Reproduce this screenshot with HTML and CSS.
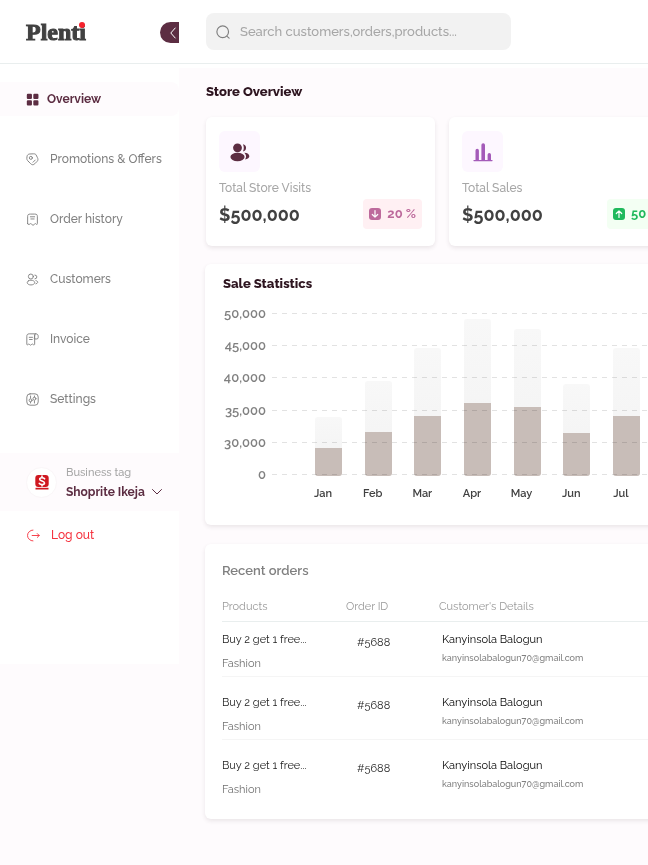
FILE: index.html
```html
<!DOCTYPE html>
<html lang="en">
<head>
<meta charset="utf-8">
<meta name="viewport" content="width=device-width, initial-scale=1">
<title>Plenti – Store Overview</title>
<link rel="stylesheet" href="styles.css">
</head>
<body>
<header class="topbar">
  <div class="brand">
    <a class="logo" href="#">Plent<span class="logo-i">i</span></a>
    <button class="collapse" type="button" aria-label="Collapse sidebar">
      <svg viewBox="0 0 8 12" width="8" height="12"><path d="M6.2 1 1.8 6l4.4 5"/></svg>
    </button>
  </div>
  <label class="search">
    <svg viewBox="0 0 24 24" width="14" height="14"><circle cx="11.5" cy="11.5" r="10"/><path d="m19 19.500 3.500 3"/></svg>
    <input type="search" aria-label="Search" placeholder="Search customers,orders,products...">
  </label>
</header>
<div class="layout">
  <aside class="sidebar">
    <nav class="menu">
      <a class="item active" href="#">
        <svg viewBox="0 0 24 24"><rect x="1.500" y="1.500" width="9.500" height="9.500" rx="2"/><rect x="13.500" y="1.500" width="9.500" height="9.500" rx="2"/><rect x="1.500" y="13.500" width="9.500" height="9.500" rx="2"/><rect x="13.500" y="13.500" width="9.500" height="9.500" rx="2"/></svg>Overview</a>
      <a class="item" href="#">
        <svg viewBox="0 0 24 24"><path d="m4.2 15.3 4.5 4.5c2.5 2.5 5 2.500 7.500 0l4.300-4.300c2-2 2-4.500.4-7.500l-2.200-4.300C17.800 1.900 16.500 1.500 14 1.500L7 1.800C4 2 2 4 1.800 7l-.3 3.200c0 2.100 1.200 3.600 2.700 5.100Z"/><circle cx="9" cy="9" r="2.800"/><path d="m13 17 4-4"/></svg>Promotions &amp; Offers</a>
      <a class="item" href="#">
        <svg viewBox="0 0 24 24"><path d="M3 19.500V7c0-4 1.200-5 5-5h8c3.800 0 5 1 5 5v12.500c0 2-1 2.200-2.200 1l-.4-.4c-.8-.9-2-.8-2.700.2l-1.200 1.500c-1 1.200-2 1.200-3 0l-1.200-1.500c-.7-1-1.900-1.100-2.700-.2l-.4.4C4 21.700 3 21.500 3 19.500ZM8 7h8M9 11h6"/></svg>Order history</a>
      <a class="item" href="#">
        <svg viewBox="0 0 24 24"><circle cx="9" cy="6.500" r="4.600"/><path d="M16.400 3.800a3.500 3.500 0 0 1 .2 7M4.200 14.600c-2.700 1.700-2.700 4.500 0 6.100 2.700 1.800 7.200 1.800 9.900 0 2.700-1.700 2.700-4.500 0-6.100-2.700-1.800-7.200-1.800-9.900 0ZM18.300 20c3.500-.6 4.500-3.700 1.900-5.200-.5-.4-1.200-.6-1.900-.8"/></svg>Customers</a>
      <a class="item" href="#">
        <svg viewBox="0 0 24 24"><path d="M16 3.500c0-1.200 1-2 2-2 3 0 4.500 2 4.500 4.500v2.500c0 1.500-1 2.500-2.500 2.500h-4ZM18 1.500H6c-3.500 0-4.500 2-4.500 4.500v15c0 .8 1 1.300 1.600.8l1.700-1.300c.4-.3 1-.3 1.300.1L7.800 22.300c.4.400 1 .4 1.400 0l1.700-1.700c.3-.4.9-.4 1.300-.1l1.700 1.300c.7.500 2.100 0 2.100-.8V3.500M6 8h6M6.500 12h5"/></svg>Invoice</a>
      <a class="item" href="#">
        <svg viewBox="0 0 24 24"><rect x="1.500" y="1.500" width="21" height="21" rx="6"/><path d="M15.600 18.500v-4M15.600 7.500v-2M8.400 18.500v-2M8.400 9.500v-4"/><circle cx="15.600" cy="10.500" r="2.700"/><circle cx="8.400" cy="13.500" r="2.700"/></svg>Settings</a>
    </nav>
    <div class="business">
      <span class="avatar">
        <svg viewBox="0 0 14 15" width="14" height="15"><rect class="red" x=".3" y="0" width="13.400" height="12" rx="3"/><path class="white" d="M9.600 3.800C8.500 2.300 4.700 2.200 4.700 4.200c0 2.100 4.800 1.400 4.800 3.700 0 2.100-4 2-5.200.5M7 1v1.500M7 9.500V11"/><path class="red" d="M.5 12.800h13v1.700H.5z"/></svg>
      </span>
      <div class="business-text">
        <label for="business">Business tag</label>
        <div class="picker">
          <select id="business"><option>Shoprite Ikeja</option></select>
          <svg viewBox="0 0 12 8" width="12" height="8"><path d="m1.500 1.500 4.500 4.500 4.500-4.500"/></svg>
        </div>
      </div>
    </div>
    <a class="logout" href="#">
      <svg viewBox="0 0 24 24"><path d="M11 22a10 10 0 0 1 0-20M9.500 12h13M19 8.500l3.500 3.500-3.500 3.500"/></svg>Log out</a>
  </aside>
  <main class="content">
    <h1>Store Overview</h1>
    <section class="stats">
      <article class="card stat">
        <span class="badge"><svg class="people" viewBox="0 0 24 24" width="20" height="20"><circle cx="9" cy="7" r="5.300"/><path d="M15.500 2.600a4.400 4.400 0 0 1 0 8.700c1.400-2.600 1.400-6.100 0-8.700Z"/><ellipse cx="9" cy="18" rx="8.500" ry="5"/><path d="M17 13c8 .2 8.200 7.500 1 8 2-2.500 1.500-6-1-8Z"/></svg></span>
        <p class="stat-name">Total Store Visits</p>
        <div class="stat-row"><strong>$500,000</strong>
          <span class="trend down"><svg viewBox="0 0 12 12" width="12" height="12"><rect width="12" height="12" rx="3"/><path d="M6 2.500v6.500M3.300 6.500 6 9.200l2.700-2.700"/></svg>20 %</span></div>
      </article>
      <article class="card stat">
        <span class="badge"><svg class="chart-icon" viewBox="0 0 20 20" width="20" height="20"><path d="M1 18.600h18"/><path class="col" d="M2.500 18V8.500a1.700 1.700 0 0 1 3.400 0V18ZM8.400 18V3a1.800 1.800 0 0 1 3.600 0v15ZM14.600 18v-5.200a1.700 1.700 0 0 1 3.400 0V18Z"/></svg></span>
        <p class="stat-name">Total Sales</p>
        <div class="stat-row"><strong>$500,000</strong>
          <span class="trend up"><svg viewBox="0 0 12 12" width="12" height="12"><rect width="12" height="12" rx="3"/><path d="M6 9.500V3M3.300 5.500 6 2.800l2.700 2.700"/></svg>50</span></div>
      </article>
    </section>
    <section class="card sales">
      <h2>Sale Statistics</h2>
      <div class="chart">
        <ul class="ticks"><li>50,000</li><li>45,000</li><li>40,000</li><li>35,000</li><li>30,000</li><li>0</li></ul>
        <ul class="lines"><li></li><li></li><li></li><li></li><li></li><li></li></ul>
        <div class="bars">
          <div class="bar" style="height:59px"><i style="height:28px"></i></div>
          <div class="bar" style="height:95px"><i style="height:44px"></i></div>
          <div class="bar" style="height:128px"><i style="height:60px"></i></div>
          <div class="bar" style="height:157px"><i style="height:73px"></i></div>
          <div class="bar" style="height:147px"><i style="height:69px"></i></div>
          <div class="bar" style="height:92px"><i style="height:43px"></i></div>
          <div class="bar" style="height:128px"><i style="height:60px"></i></div>
        </div>
        <ul class="months"><li>Jan</li><li>Feb</li><li>Mar</li><li>Apr</li><li>May</li><li>Jun</li><li>Jul</li></ul>
      </div>
    </section>
    <section class="card orders">
      <h2>Recent orders</h2>
      <table>
        <thead><tr><th class="product">Products</th><th class="id">Order ID</th><th>Customer's Details</th></tr></thead>
        <tbody>
          <tr><td><b>Buy 2 get 1 free...</b><span>Fashion</span></td><td class="id">#5688</td><td class="customer"><b>Kanyinsola Balogun</b><small>kanyinsolabalogun70@gmail.com</small></td></tr>
          <tr><td><b>Buy 2 get 1 free...</b><span>Fashion</span></td><td class="id">#5688</td><td class="customer"><b>Kanyinsola Balogun</b><small>kanyinsolabalogun70@gmail.com</small></td></tr>
          <tr><td><b>Buy 2 get 1 free...</b><span>Fashion</span></td><td class="id">#5688</td><td class="customer"><b>Kanyinsola Balogun</b><small>kanyinsolabalogun70@gmail.com</small></td></tr>
        </tbody>
      </table>
    </section>
  </main>
</div>
</body>
</html>
```
FILE: styles.css
```css
* { box-sizing: border-box; }
body {
  margin: 0;
  min-height: 100vh;
  background: #fefbfd;
  color: #414141;
  font: 500 12px/16px Raleway, Lato, "Open Sans", sans-serif;
  overflow-x: hidden;
}
h1, h2, p, ul { margin: 0; padding: 0; }
ul { list-style: none; }
a { color: inherit; text-decoration: none; }
svg { display: block; flex: none; fill: none; stroke: currentColor; stroke-linecap: round; stroke-linejoin: round; }

.topbar {
  display: flex;
  align-items: center;
  height: 64px;
  background: #fff;
  border-bottom: 1px solid #e9eeee;
}
.brand {
  flex: none;
  width: 179px;
  padding-left: 26px;
  display: flex;
  align-items: center;
  justify-content: space-between;
}
.logo { font: bold 24px/32px "Liberation Serif", serif; color: #414141; -webkit-text-stroke: 1px #414141; }
.logo-i { position: relative; }
.logo-i::after {
  content: "";
  position: absolute;
  top: 3px;
  left: 0;
  width: 6px;
  height: 6px;
  border-radius: 50%;
  background: #f5222d;
}
.collapse {
  display: flex;
  align-items: center;
  justify-content: flex-end;
  width: 19px;
  height: 21px;
  margin-top: 2px;
  padding: 0 2px 0 0;
  border: 0;
  border-radius: 11px 0 0 11px;
  background: #5c2d42;
  color: #fff;
}
.search {
  display: flex;
  align-items: center;
  gap: 10px;
  flex: 0 1 305px;
  height: 37px;
  margin-left: 27px;
  padding: 0 10px;
  border-radius: 8px;
  background: #f2f2f2;
  color: #808080;
}
.search svg { stroke-width: 2; }
.search input {
  flex: 1;
  min-width: 0;
  padding: 0;
  border: 0;
  outline: 0;
  background: none;
  font: inherit;
  font-size: 13px;
}
.search input::placeholder { color: #a6a6a6; opacity: 1; }

.layout { display: flex; align-items: flex-start; }

.sidebar { flex: none; width: 179px; padding: 18px 0 112px; background: #fff; }
.menu { display: flex; flex-direction: column; gap: 26px; }
.item, .logout { display: flex; align-items: center; gap: 11px; height: 34px; padding-left: 26px; color: #808080; }
.item svg, .logout svg { width: 13px; height: 13px; stroke-width: 1.7; }
.item.active { gap: 8px; border-radius: 0 8px 8px 0; background: #fefbfd; color: #5c2d42; font-weight: 700; }
.item.active svg { fill: currentColor; stroke: none; }
.business { display: flex; align-items: center; gap: 9px; height: 58px; margin-top: 37px; padding-left: 26px; background: #fefbfd; }
.avatar { display: flex; align-items: center; justify-content: center; width: 31px; height: 31px; border: 1px solid #faf6f8; border-radius: 50%; background: #fff; }
.avatar .red { fill: #cf1820; stroke: none; }
.avatar .white { stroke: #fff; stroke-width: 1.600; }
.business-text { display: flex; flex-direction: column; gap: 3px; }
.business-text label { color: #a6a6a6; font-size: 11px; }
.picker { display: flex; align-items: center; gap: 6px; color: #5c2d42; }
.picker select { appearance: none; border: 0; padding: 0; margin: 0; background: none; color: inherit; font: inherit; font-weight: 700; }
.logout { margin-top: 7px; padding-left: 27px; color: #f5333f; }

.content { flex: 1; min-width: 0; padding: 16px 0 46px 26px; overflow: hidden; border-top: 4px solid #fff; }
h1, h2 { font-size: 13px; line-height: 16px; font-weight: 800; color: #2e1520; }
.content h1, .stats { padding-left: 1px; }
.card { background: #fff; border-radius: 6px; box-shadow: 0 2px 4px rgba(60, 40, 50, .1); }
.stats { display: grid; grid-auto-flow: column; grid-auto-columns: 229px; gap: 14px; margin: 17px 0 18px; }
.stat { height: 129px; padding: 14px 13px; }
.badge { display: flex; align-items: center; justify-content: center; width: 41px; height: 41px; border-radius: 6px; background: #fdf7ff; }
.people { fill: #5c2d42; stroke: none; }
.chart-icon { color: #a45bb9; stroke-width: 1.300; }
.chart-icon .col { fill: currentColor; stroke: none; }
.stat-name { margin-top: 8px; color: #a6a6a6; }
.stat-row { display: flex; align-items: center; justify-content: space-between; margin-top: 3px; }
.stat-row strong { padding-top: 2px; font-size: 18px; line-height: 24px; }
.trend { display: flex; align-items: center; gap: 6px; min-width: 58px; height: 30px; padding: 0 6px; border-radius: 4px; font-size: 13px; font-weight: 700; }
.trend rect { fill: currentColor; stroke: none; }
.trend path { stroke: #fff; stroke-width: 1.200; }
.down { background: #fff0f3; color: #bd6a9c; }
.up { background: #f3fff3; color: #1fb95c; }

.sales, .orders { width: 960px; }
.sales { padding: 12px 18px 23px; }
.chart { display: grid; grid-template: 177px 16px / 43px 1fr; column-gap: 6px; row-gap: 3px; margin-top: 14px; }
.ticks, .lines { display: flex; flex-direction: column; justify-content: space-between; }
.ticks { text-align: right; font-size: 13px; font-weight: 600; color: #808080; }
.lines, .bars { grid-area: 1 / 2; }
.lines li { height: 16px; background: repeating-linear-gradient(90deg, #e2e2e2 0 5px, transparent 5px 10px) 0 7px / 100% 1px no-repeat; }
.bars, .months { display: flex; justify-content: space-between; }
.bars { align-items: flex-end; width: 325px; margin-left: 43px; padding-bottom: 7px; mix-blend-mode: multiply; }
.bar { display: flex; align-items: flex-end; width: 27px; border-radius: 3px; overflow: hidden; background: linear-gradient(#f8f8f8, #f2f2f2); }
.bar i { flex: 1; background: #c8bdb8; }
.months { grid-area: 2 / 2; width: 338px; margin-left: 31px; font-size: 11px; font-weight: 600; text-align: center; color: #414141; }
.months li { width: 40px; }

.orders { margin-top: 19px; padding: 19px 18px 17px 17px; }
.orders h2 { font-size: 13px; font-weight: 600; color: #808080; }
table { width: 100%; margin-top: 16px; border-collapse: separate; border-spacing: 0; table-layout: fixed; font-size: 11px; line-height: 24px; }
th { padding: 0 0 2px; border-bottom: 1px solid #e9eeee; text-align: left; font-weight: 400; color: #999; }
th.product { width: 124px; }
th.id { width: 93px; }
td { padding: 14px 0 0; vertical-align: top; border-bottom: 1px solid #f5f5f5; font-weight: 400; color: #222; }
tr:first-child td { padding-top: 6px; }
tr:last-child td { border-bottom: 0; }
td b, td span, td small { display: block; font-weight: 400; }
td span { color: #707070; }
td.id { padding-left: 11px; line-height: 30px; }
td.customer { padding-left: 3px; color: #000; }
td small { color: #808080; font-size: 9px; font-weight: 500; line-height: 12px; }
```
